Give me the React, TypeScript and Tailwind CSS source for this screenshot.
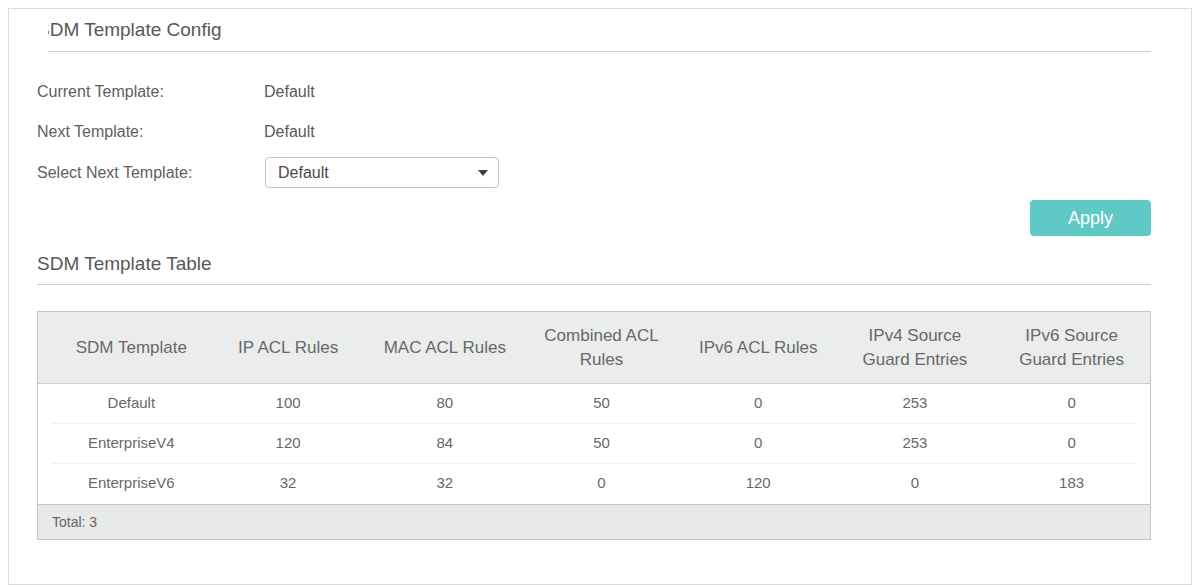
import React from "react";

const COLUMNS = [
  ["SDM Template"],
  ["IP ACL Rules"],
  ["MAC ACL Rules"],
  ["Combined ACL", "Rules"],
  ["IPv6 ACL Rules"],
  ["IPv4 Source", "Guard Entries"],
  ["IPv6 Source", "Guard Entries"],
];

const ROWS = [
  ["Default", "100", "80", "50", "0", "253", "0"],
  ["EnterpriseV4", "120", "84", "50", "0", "253", "0"],
  ["EnterpriseV6", "32", "32", "0", "120", "0", "183"],
];

export default function App() {
  return (
    <div className="w-[1193px] h-[587px] bg-white overflow-hidden font-['Liberation_Sans',Arial,sans-serif] text-[#606060]">
      <div className="ml-2 mt-2 w-[1184px] h-[577px] border border-[#dadada] pl-[28px] pr-[40px] pt-[9px]">
        {/* SDM Template Config */}
        <div className="ml-[11px] overflow-hidden border-b border-[#cdcdcd] pb-[9px]">
          <div className="-ml-[11px] h-[24px] leading-[24px] text-[19px] text-[#585858] whitespace-nowrap">
            SDM Template Config
          </div>
        </div>

        <div className="mt-[30px] h-[20px] flex items-center text-[16px] leading-[20px]">
          <span className="w-[227px]">Current Template:</span>
          <span className="text-[#585858]">Default</span>
        </div>
        <div className="mt-[20px] h-[20px] flex items-center text-[16px] leading-[20px]">
          <span className="w-[227px]">Next Template:</span>
          <span className="text-[#585858]">Default</span>
        </div>
        <div className="mt-[15px] h-[31px] flex items-center text-[16px] leading-[20px]">
          <span className="w-[228px]">Select Next Template:</span>
          <div className="w-[234px] h-[31px] border border-[#c4c4c4] rounded-[4px] flex items-center justify-between pl-[12px] pr-[10px] text-[#4a4a4a]">
            <span>Default</span>
            <svg width="10" height="6" viewBox="0 0 10 6">
              <path d="M0 0 L10 0 L5 6 Z" fill="#3f3f3f" />
            </svg>
          </div>
        </div>

        <div className="mt-[12px] flex justify-end">
          <button className="w-[121px] h-[36px] rounded-[4px] bg-[#5fc9c5] text-white text-[18px] leading-[36px]">
            Apply
          </button>
        </div>

        {/* SDM Template Table */}
        <div className="mt-[16px] border-b border-[#cdcdcd] pb-[8px]">
          <div className="h-[24px] leading-[24px] text-[19px] text-[#585858]">SDM Template Table</div>
        </div>

        <div className="mt-[26px] border border-[#c6c6c6] text-[#686868]">
          <div className="h-[72px] bg-[#ebecec] border-b border-[#cccccc] grid grid-cols-7 pl-[15px] items-center text-[17px] leading-[24px]">
            {COLUMNS.map((lines, i) => (
              <div key={i} className="text-center">
                {lines.map((l) => (
                  <div key={l}>{l}</div>
                ))}
              </div>
            ))}
          </div>
          {ROWS.map((row, r) => (
            <div key={row[0]}>
              <div className="h-[39px] grid grid-cols-7 pl-[15px] items-center text-[15px]">
                {row.map((cell, c) => (
                  <div key={c} className="text-center">
                    {cell}
                  </div>
                ))}
              </div>
              <div className={`h-px mx-[14px] ${r < ROWS.length - 1 ? "bg-[#f0f0f0]" : ""}`} />
            </div>
          ))}
          <div className="h-[35px] bg-[#e8e9e9] border-t border-[#c6c6c6] flex items-center pl-[14px] text-[14px] text-[#666]">
            Total: 3
          </div>
        </div>
      </div>
    </div>
  );
}
